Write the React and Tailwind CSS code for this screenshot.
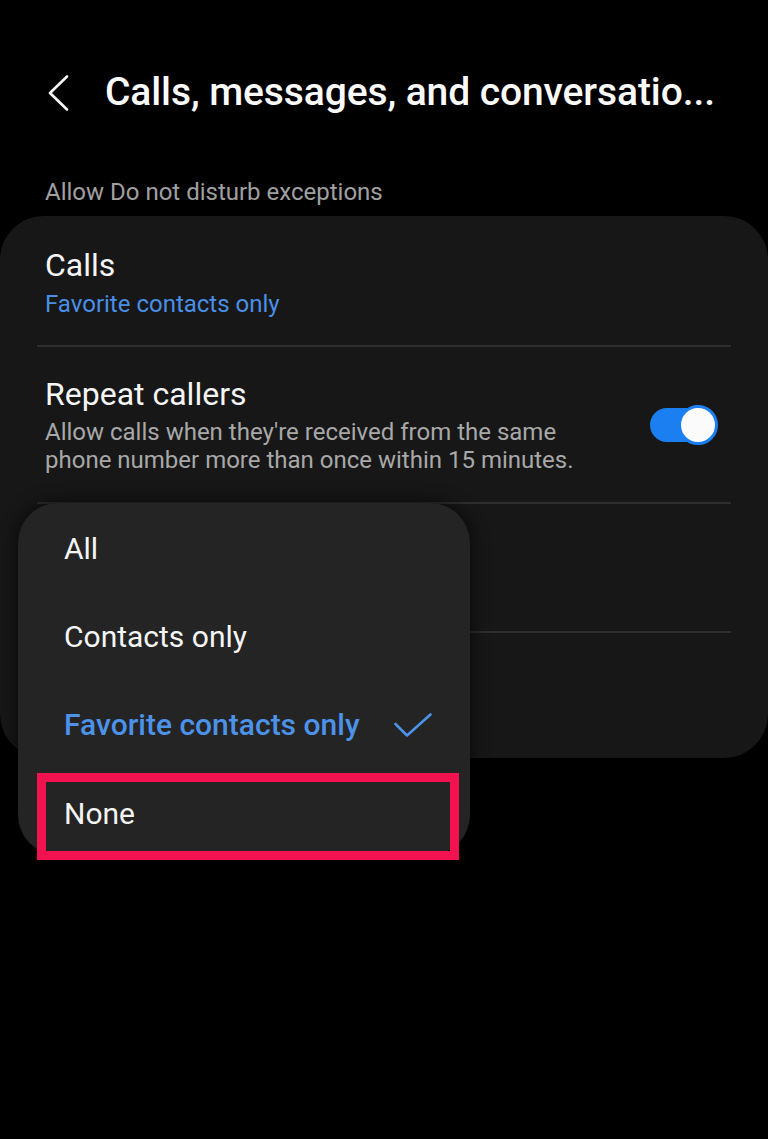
import React from 'react';

const font = { fontFamily: 'Roboto, "Noto Sans", sans-serif' };

const Divider = () => <div className="mx-[37px] h-[2px] bg-[#2e2e2e]" />;

const Toggle = () => (
  <div className="relative w-[68px] h-[40px] shrink-0">
    <div className="absolute left-0 top-[3px] w-[56px] h-[34px] rounded-full bg-[#1b7ff2]" />
    <div className="absolute right-0 top-0 w-[40px] h-[40px] rounded-full bg-[#fbfbfb] border-[3px] border-[#1b7ff2]" />
  </div>
);

const options = ['All', 'Contacts only', 'Favorite contacts only', 'None'];

export default function App() {
  return (
    <div className="relative min-h-[1139px] w-[768px] bg-black text-white overflow-hidden" style={font}>
      <header className="flex items-center pt-[69px] pl-[48px]">
        <svg width="21" height="36" viewBox="0 0 21 36" fill="none" className="mt-[2px]">
          <polyline points="19,1.5 2,18 19,34.5" stroke="#f5f5f5" strokeWidth="2.6" strokeLinecap="round" strokeLinejoin="round" />
        </svg>
        <h1 className="ml-[36px] text-[39px] leading-[46px] font-medium tracking-[-0.1px] whitespace-nowrap text-[#fafafa]">
          Calls, messages, and conversatio...
        </h1>
      </header>

      <div className="mt-[63px] pl-[45px] text-[24px] leading-[28px] text-[#a0a0a0]">
        Allow Do not disturb exceptions
      </div>

      <section className="mt-[10px] rounded-[44px] bg-[#171717]">
        <div className="px-[45px] pt-[30px] pb-[26px]">
          <div className="text-[32px] leading-[38px] text-[#f5f5f5]">Calls</div>
          <div className="mt-[5px] text-[24px] leading-[30px] text-[#4a8fe6]">Favorite contacts only</div>
        </div>
        <Divider />
        <div className="flex items-center justify-between pl-[45px] pr-[50px] pt-[28px] pb-[28px]">
          <div>
            <div className="text-[32px] leading-[38px] text-[#f5f5f5]">Repeat callers</div>
            <div className="mt-[5px] text-[24px] leading-[28px] text-[#a8a8a8]">
              Allow calls when they're received from the same
              <br />
              phone number more than once within 15 minutes.
            </div>
          </div>
          <Toggle />
        </div>
        <Divider />
        <div className="h-[127px]" />
        <Divider />
        <div className="h-[125px]" />
      </section>

      <div className="absolute left-[18px] top-[503px] w-[452px] h-[352px] rounded-[40px] bg-[#242424] shadow-[0_0_18px_rgba(0,0,0,0.7)] pt-[1px]">
        {options.map((o) => {
          const sel = o === 'Favorite contacts only';
          return (
            <div key={o} className="flex items-center justify-between h-[88.3px] pl-[46px] pr-[38px]">
              <span className={sel ? 'text-[30px] font-medium text-[#4c92e8]' : 'text-[30px] text-[#f5f5f5]'}>{o}</span>
              {sel && (
                <svg width="38" height="24" viewBox="0 0 38 24" fill="none">
                  <polyline points="1.5,11 13,22.5 36.5,1.5" stroke="#4c92e8" strokeWidth="2.6" strokeLinecap="round" strokeLinejoin="round" />
                </svg>
              )}
            </div>
          );
        })}
      </div>

      <div className="absolute left-[37px] top-[773px] w-[422px] h-[87px] border-[9px] border-[#f2124f]" />
    </div>
  );
}
